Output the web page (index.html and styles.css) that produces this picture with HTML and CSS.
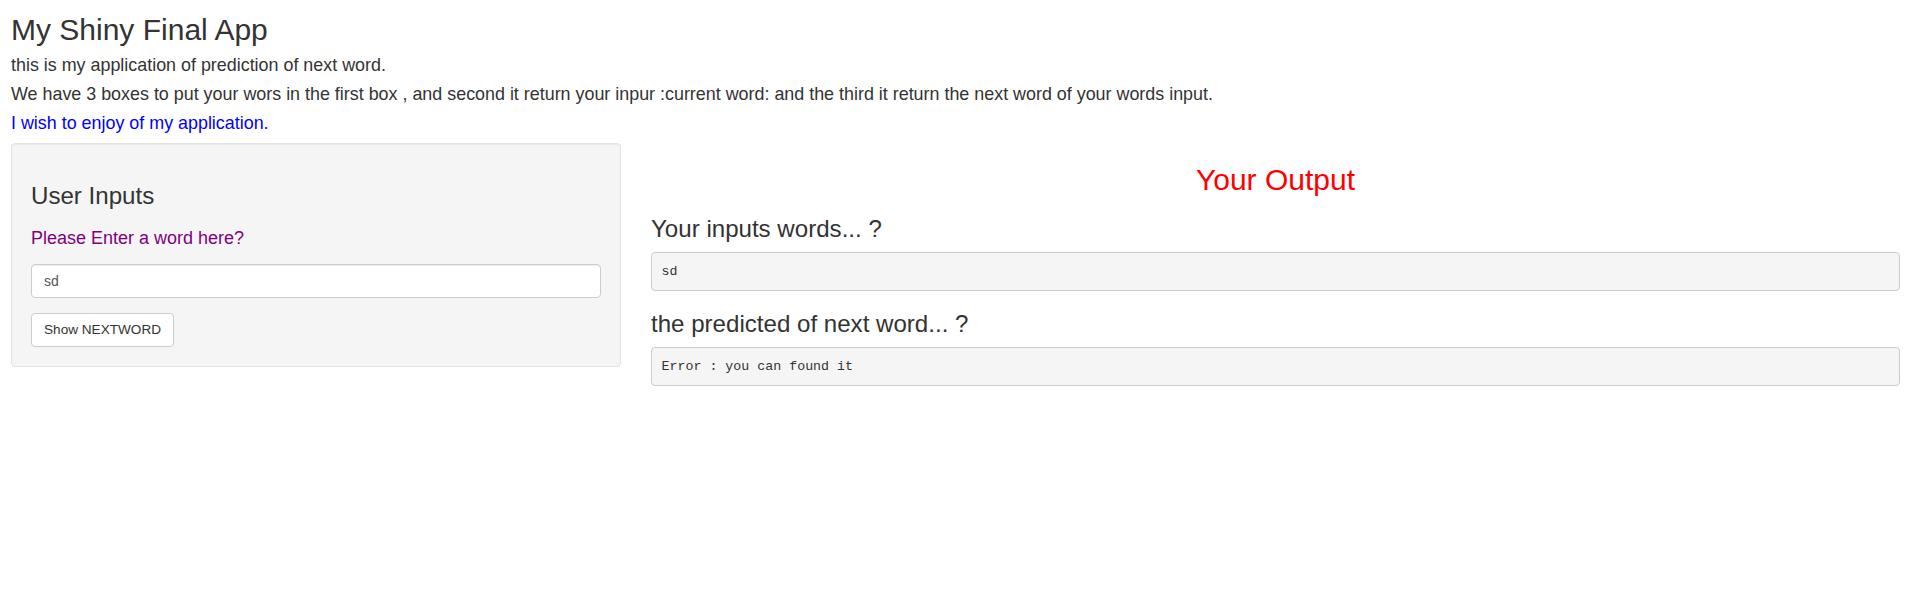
FILE: index.html
```html
<!DOCTYPE html>
<html lang="en">
<head>
<meta charset="utf-8">
<title>My Shiny Final App</title>
<link rel="stylesheet" href="styles.css">
</head>
<body>
<div class="page">
  <h2 class="app-title">My Shiny Final App</h2>
  <h4 class="intro">this is my application of prediction of next word.</h4>
  <h4 class="intro">We have 3 boxes to put your wors in the first box , and second it return your inpur :current word: and the third it return the next word of your words input.</h4>
  <h4 class="intro intro-blue">I wish to enjoy of my application.</h4>

  <div class="layout">
    <div class="well">
      <h3 class="section-title">User Inputs</h3>
      <div class="form-group">
        <label class="field-label" for="word"><span class="label-text">Please Enter a word here?</span></label>
        <input class="text-input" id="word" type="text" value="sd">
      </div>
      <button class="btn" type="button">Show NEXTWORD</button>
    </div>

    <div class="main">
      <h2 class="output-title">Your Output</h2>
      <h3 class="section-title">Your inputs words... ?</h3>
      <pre class="verbatim">sd</pre>
      <h3 class="section-title">the predicted of next word... ?</h3>
      <pre class="verbatim">Error : you can found it</pre>
    </div>
  </div>
</div>
</body>
</html>
```

FILE: styles.css
```css
* {
  box-sizing: border-box;
}

html, body {
  margin: 0;
  background: #ffffff;
}

body {
  font-family: "Liberation Sans", Arial, Helvetica, sans-serif;
  font-size: 14px;
  line-height: 20px;
  color: #333333;
}

.page {
  padding: 0 15px 0 11px;
}

.app-title {
  font-size: 30px;
  font-weight: 500;
  line-height: 33px;
  margin: 13px 0 10px;
}

.intro {
  font-size: 17.9px;
  font-weight: 500;
  line-height: 19px;
  margin: 10px 0;
}

.intro-blue {
  color: #0000ff;
}

.layout {
  display: grid;
  grid-template-columns: 610px 1fr;
  column-gap: 30px;
  align-items: start;
}

.well {
  background: #f5f5f5;
  border: 1px solid #e3e3e3;
  border-radius: 4px;
  box-shadow: inset 0 1px 1px rgba(0, 0, 0, 0.05);
  padding: 19px;
}

.section-title {
  font-size: 24.1px;
  font-weight: 500;
  line-height: 26.4px;
  margin: 20px 0 10px;
}

.form-group {
  margin-bottom: 15px;
}

.field-label {
  display: flow-root;
  margin-bottom: 5px;
}

.label-text {
  display: block;
  font-size: 18px;
  font-weight: 500;
  line-height: 19.8px;
  margin: 10px 0;
  color: #800080;
}

.text-input {
  display: block;
  width: 100%;
  height: 34px;
  padding: 6px 12px;
  font-family: "Liberation Sans", Arial, Helvetica, sans-serif;
  font-size: 14px;
  line-height: 20px;
  color: #555555;
  background: #ffffff;
  border: 1px solid #cccccc;
  border-radius: 4px;
  box-shadow: inset 0 1px 1px rgba(0, 0, 0, 0.075);
}

.btn {
  display: inline-block;
  height: 34px;
  padding: 6px 12px;
  font-family: "Liberation Sans", Arial, Helvetica, sans-serif;
  font-size: 13.6px;
  line-height: 20px;
  color: #333333;
  background: #ffffff;
  border: 1px solid #cccccc;
  border-radius: 4px;
  cursor: pointer;
}

.main {
  min-width: 0;
}

.output-title {
  font-size: 30px;
  font-weight: 500;
  line-height: 33px;
  margin: 20px 0 10px;
  text-align: center;
  color: #ff0000;
}

.verbatim {
  margin: 0 0 10px;
  padding: 9.5px;
  font-family: "Liberation Mono", "Courier New", monospace;
  font-size: 13.3px;
  line-height: 17.4px;
  color: #333333;
  background: #f5f5f5;
  border: 1px solid #cccccc;
  border-radius: 4px;
  white-space: pre-wrap;
}
```
